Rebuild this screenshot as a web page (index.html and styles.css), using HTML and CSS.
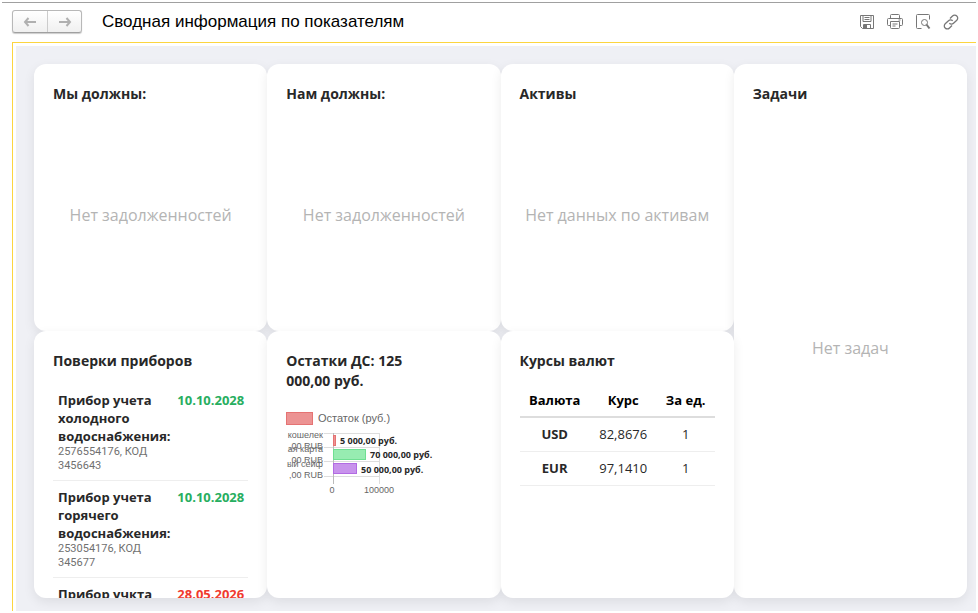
FILE: index.html
```html
<!DOCTYPE html>
<html lang="ru">
<head>
<meta charset="utf-8">
<title>Сводная информация по показателям</title>
<link rel="stylesheet" href="styles.css">
</head>
<body>
<div class="window">
  <header class="toolbar">
    <nav class="history">
      <button type="button" class="history-button" aria-label="Назад">
        <svg width="14" height="10" viewBox="0 0 14 10"><path d="M5.500 1 2 5l3.500 4M2 5h11"/></svg>
      </button>
      <button type="button" class="history-button" aria-label="Вперед">
        <svg width="14" height="10" viewBox="0 0 14 10"><path d="M8.500 1 12 5l-3.500 4M12 5H1"/></svg>
      </button>
    </nav>
    <h1 class="page-title">Сводная информация по показателям</h1>
    <div class="actions">
      <button type="button" class="action" aria-label="Сохранить">
        <svg width="16" height="16" viewBox="0 0 16 16"><path d="M1.500 1.500h13v13h-11l-2-2zM4 1.500v6h8v-6M5.500 3.500h5M5.500 5.500h5M4.500 14.500v-4h7v4"/><path class="solid" d="M5 11h3v3H5z"/></svg>
      </button>
      <button type="button" class="action" aria-label="Печать">
        <svg width="16" height="16" viewBox="0 0 16 16"><path d="M3.500 4.500v-3q0-1 1-1h7q1 0 1 1v3M3.500 11.500h-2q-1 0-1-1v-5q0-1 1-1h13q1 0 1 1v5q0 1-1 1h-2M3.500 7.500h9v6q0 1-1 1h-7q-1 0-1-1zM5.500 10h5M5.500 12h3M11.500 6h2"/></svg>
      </button>
      <button type="button" class="action" aria-label="Предварительный просмотр">
        <svg width="16" height="16" viewBox="0 0 16 16"><path d="M6.500 14.500h-4q-1 0-1-1v-12q0-1 1-1h11q1 0 1 1v4"/><circle cx="9.500" cy="8.500" r="3"/><path class="thick" d="m11.500 10.500 3 4"/></svg>
      </button>
      <button type="button" class="action" aria-label="Получить ссылку">
        <svg width="16" height="16" viewBox="0 0 16 16"><path class="link" d="m7 4.500 2.500-2.500a2.900 2.900 0 0 1 4.300 0 2.900 2.900 0 0 1 0 4.200L10.500 9.300a2.900 2.900 0 0 1-4.200 0M9 11.500 6.500 14a2.900 2.900 0 0 1-4.300 0 2.900 2.900 0 0 1 0-4.200L5.500 6.700a2.900 2.900 0 0 1 4.200 0"/></svg>
      </button>
    </div>
  </header>
  <main class="frame">
    <div class="board">
      <section class="card">
        <h2 class="card-title">Мы должны:</h2>
        <p class="empty">Нет задолженностей</p>
      </section>
      <section class="card">
        <h2 class="card-title">Нам должны:</h2>
        <p class="empty">Нет задолженностей</p>
      </section>
      <section class="card">
        <h2 class="card-title">Активы</h2>
        <p class="empty">Нет данных по активам</p>
      </section>
      <section class="card card-tall">
        <h2 class="card-title">Задачи</h2>
        <p class="empty">Нет задач</p>
      </section>
      <section class="card">
        <h2 class="card-title">Поверки приборов</h2>
        <ul class="meters">
          <li class="meter">
            <div class="meter-info"><strong class="meter-name">Прибор учета холодного водоснабжения:</strong><span class="meter-code">2576554176, КОД 3456643</span></div>
            <time class="meter-date" datetime="2028-10-10">10.10.2028</time>
          </li>
          <li class="meter">
            <div class="meter-info"><strong class="meter-name">Прибор учета горячего водоснабжения:</strong><span class="meter-code">253054176, КОД 345677</span></div>
            <time class="meter-date" datetime="2028-10-10">10.10.2028</time>
          </li>
          <li class="meter">
            <div class="meter-info"><strong class="meter-name">Прибор учкта</strong></div>
            <time class="meter-date overdue" datetime="2026-05-28">28.05.2026</time>
          </li>
        </ul>
      </section>
      <section class="card">
        <h2 class="card-title">Остатки ДС: 125 000,00 руб.</h2>
        <svg class="chart" width="160" height="90" viewBox="0 0 160 90" role="img" aria-label="Остаток (руб.)">
          <rect class="red" x="0.500" y="2.500" width="26" height="12"/>
          <text class="legend" x="32" y="12">Остаток (руб.)</text>
          <path class="grid" d="M38 23.500h56M38 37.500h56M38 51.500h56M38 66.500h56M93.500 23v51"/>
          <path class="axis" d="M47.500 23v51"/>
          <g class="category">
            <text x="37" y="28">кошелек</text>
            <text x="37" y="39">,00 RUB</text>
            <text x="37" y="42">ая карта</text>
            <text x="37" y="53">,00 RUB</text>
            <text x="37" y="57">ый сейф</text>
            <text x="37" y="68">,00 RUB</text>
          </g>
          <rect class="red" x="47.500" y="25.500" width="2" height="10"/>
          <rect class="green" x="47.500" y="39.500" width="32" height="10"/>
          <rect class="purple" x="47.500" y="53.500" width="23" height="10"/>
          <g class="value">
            <text x="54" y="34">5 000,00 руб.</text>
            <text x="84" y="48">70 000,00 руб.</text>
            <text x="75" y="63">50 000,00 руб.</text>
          </g>
          <g class="tick">
            <text x="46" y="83">0</text>
            <text x="93" y="83">100000</text>
          </g>
        </svg>
      </section>
      <section class="card">
        <h2 class="card-title">Курсы валют</h2>
        <table class="rates">
          <thead><tr><th scope="col">Валюта</th><th scope="col">Курс</th><th scope="col">За ед.</th></tr></thead>
          <tbody>
            <tr><th scope="row">USD</th><td>82,8676</td><td>1</td></tr>
            <tr><th scope="row">EUR</th><td>97,1410</td><td>1</td></tr>
          </tbody>
        </table>
      </section>
    </div>
  </main>
</div>
</body>
</html>
```
FILE: styles.css
```css
* { box-sizing: border-box; }

body {
  margin: 0;
  background: #fff;
  color: #282828;
  font-family: "Open Sans", "Noto Sans", sans-serif;
}

.window {
  display: flex;
  flex-direction: column;
  height: 100vh;
  padding: 2px;
}

.toolbar {
  display: flex;
  align-items: center;
  height: 40px;
  padding: 0 17px 2px 10px;
  border-top: 1px solid #a0a0a0;
}

.history {
  display: flex;
  height: 23px;
  border: 1px solid #b8b8b8;
  border-bottom-color: #a0a0a0;
  border-radius: 3px;
  background: linear-gradient(#fff, #f0f0f0);
  box-shadow: 0 1px 1px #ccc;
}

.history-button {
  display: flex;
  align-items: center;
  justify-content: center;
  width: 34px;
  padding: 0;
  border: 0;
  background: none;
}

.history-button + .history-button { border-left: 1px solid #ccc; }

.history-button path {
  fill: none;
  stroke: #b0b0b0;
  stroke-width: 2;
}

.page-title {
  margin: 0 auto 0 20px;
  color: #000;
  font: 400 17px/24px "Liberation Sans", Arial, sans-serif;
}

.actions { display: flex; gap: 12px; }

.action {
  display: flex;
  padding: 0;
  border: 0;
  background: none;
}

.action path,
.action circle {
  fill: none;
  stroke: #777;
}

.action .solid { fill: #777; stroke: none; }
.action .thick { stroke-width: 2; }
.action .link { stroke-width: 1.3; }

.frame {
  flex: 1;
  display: flex;
  min-height: 0;
  margin-left: 10px;
  padding: 3px 0 0 3px;
  border: solid #fcd53f;
  border-width: 1px 0 0 1px;
}

.board {
  flex: 1;
  display: grid;
  grid-template-columns: repeat(4, minmax(0, 1fr));
  grid-template-rows: repeat(2, minmax(0, 1fr));
  min-width: 0;
  padding: 18px 9px 13px 18px;
  background: #eff0f5;
}

.card {
  display: flex;
  flex-direction: column;
  overflow: hidden;
  padding: 20px 19px 19px;
  border-radius: 12px;
  background: #fff;
  box-shadow: 0 4px 12px rgba(0, 0, 0, 0.08);
}

.card-tall { grid-column: 4; grid-row: 1 / span 2; }

.card-title {
  flex: none;
  margin: 0 0 13px;
  padding-right: 40px;
  font-size: 14px;
  line-height: 20px;
}

.empty {
  flex: 1;
  display: flex;
  align-items: center;
  justify-content: center;
  margin: 0;
  color: #b4b4b4;
  font-size: 16px;
  white-space: nowrap;
}

.meters {
  margin: 0;
  padding: 0;
  list-style: none;
}

.meter {
  display: flex;
  justify-content: space-between;
  padding: 7px 4px 7px 5px;
  border-bottom: 1px solid #eee;
}

.meter-info { width: 100px; }

.meter-name {
  display: block;
  font-size: 13px;
  line-height: 18px;
}

.meter-code {
  display: block;
  color: #707070;
  font-family: Roboto, "Open Sans", sans-serif;
  font-size: 11px;
  line-height: 14px;
}

.meter-date {
  color: #27ae60;
  font-size: 13px;
  font-weight: 700;
  line-height: 18px;
}

.meter-date.overdue { color: #f03a2e; }

.chart {
  flex: none;
  margin-top: 6px;
}

.chart text { font-family: "Liberation Sans", Arial, sans-serif; fill: #666; }
.chart .legend { font-size: 11px; }
.chart .category text { font-size: 9px; text-anchor: end; }
.chart .tick text { font-size: 9px; text-anchor: middle; }
.chart .value text { fill: #282828; font: 700 9px "Open Sans", sans-serif; }
.chart .grid { fill: none; stroke: #ddd; }
.chart .axis { fill: none; stroke: #bbb; }
.chart .red { fill: #ec9393; stroke: #e57373; }
.chart .green { fill: #97ecb1; stroke: #6fdf92; }
.chart .purple { fill: #c893ec; stroke: #b26be3; }

.rates {
  width: 100%;
  border-collapse: collapse;
  font-size: 13px;
  line-height: 18px;
  text-align: center;
}

.rates th,
.rates td { padding: 7px 8px; border-bottom: 1px solid #eee; }

.rates td,
.rates tbody th { padding-bottom: 8px; }

.rates thead th {
  border-bottom: 2px solid #ddd;
  color: #000;
}
```
